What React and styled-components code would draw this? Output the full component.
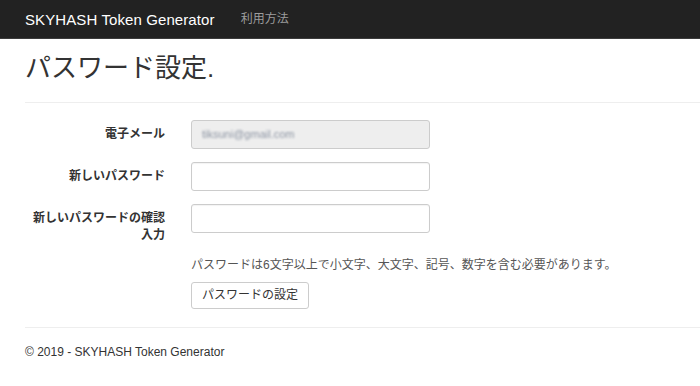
import React from "react";
import styled, { createGlobalStyle } from "styled-components";

const GlobalStyle = createGlobalStyle`
  html, body { margin: 0; padding: 0; background: #fff; }
  body {
    font-family: "Liberation Sans", "Noto Sans CJK JP", sans-serif;
    font-size: 12px;
    line-height: 17px;
    color: #333;
  }
  * { box-sizing: border-box; }
`;

const Navbar = styled.nav`
  height: 39px;
  background: #222;
  border-bottom: 1px solid #3c3c3c;
  display: flex;
  align-items: center;
  padding-left: 12px;
`;

const Brand = styled.a`
  color: #fff;
  font-size: 15px;
  padding: 0 13px;
  text-decoration: none;
  letter-spacing: 0.1px;
`;

const NavLink = styled.a`
  color: #9d9d9d;
  font-size: 12px;
  padding: 0 13px;
  text-decoration: none;
`;

const Container = styled.div`
  padding-left: 25px;
`;

const Title = styled.h2`
  margin: 15px 0 19px;
  font-size: 26px;
  line-height: 29px;
  font-weight: 400;
  color: #333;
  font-family: "Liberation Sans", "Noto Sans CJK JP", sans-serif;
`;

const Rule = styled.hr`
  margin: 0;
  border: 0;
  border-top: 1px solid #eee;
`;

const Form = styled.form`
  padding-top: 17px;
  display: flex;
  flex-direction: column;
  gap: 13px;
`;

const Row = styled.div`
  display: grid;
  grid-template-columns: 140px 239px;
  column-gap: 26px;
  align-items: start;
`;

const Label = styled.label`
  grid-column: 1;
  text-align: right;
  font-weight: 700;
  padding-top: 6px;
  color: #333;
`;

const Input = styled.input`
  grid-column: 2;
  height: 29px;
  width: 239px;
  border: 1px solid #ccc;
  border-radius: 3px;
  background: ${(p) => (p.disabled ? "#eee" : "#fff")};
  font: inherit;
  padding: 0 10px;
  color: #8a8a8a;
  box-shadow: inset 0 1px 1px rgba(0, 0, 0, 0.05);
  &:disabled { -webkit-text-fill-color: #9a9fa8; }
`;

const BlurText = styled.span`
  filter: blur(1.1px);
`;

const FakeInput = styled.div`
  grid-column: 2;
  height: 29px;
  border: 1px solid #ccc;
  border-radius: 3px;
  background: #eee;
  padding: 0 10px;
  display: flex;
  align-items: center;
  color: #8d95a3;
  font-size: 11px;
`;

const Actions = styled.div`
  margin-left: 166px;
  display: flex;
  flex-direction: column;
  align-items: flex-start;
  gap: 8px;
`;

const Help = styled.p`
  margin: 0;
  color: #555;
  white-space: nowrap;
`;

const Button = styled.button`
  height: 27px;
  padding: 0 10px;
  border: 1px solid #ccc;
  border-radius: 3px;
  background: #fff;
  color: #333;
  font: inherit;
`;

const FooterRule = styled(Rule)`
  margin-top: 18px;
`;

const Footer = styled.footer`
  padding-top: 16px;
  color: #333;
`;

export default function App() {
  return (
    <>
      <GlobalStyle />
      <Navbar>
        <Brand href="#">SKYHASH Token Generator</Brand>
        <NavLink href="#">利用方法</NavLink>
      </Navbar>
      <Container>
        <Title>パスワード設定.</Title>
        <Rule />
        <Form>
          <Row>
            <Label>電子メール</Label>
            <FakeInput>
              <BlurText>tiksuni@gmail.com</BlurText>
            </FakeInput>
          </Row>
          <Row>
            <Label>新しいパスワード</Label>
            <Input type="password" />
          </Row>
          <Row>
            <Label>新しいパスワードの確認入力</Label>
            <Input type="password" />
          </Row>
          <Actions>
            <Help>パスワードは6文字以上で小文字、大文字、記号、数字を含む必要があります。</Help>
            <Button type="button">パスワードの設定</Button>
          </Actions>
        </Form>
        <FooterRule />
        <Footer>© 2019 - SKYHASH Token Generator</Footer>
      </Container>
    </>
  );
}
